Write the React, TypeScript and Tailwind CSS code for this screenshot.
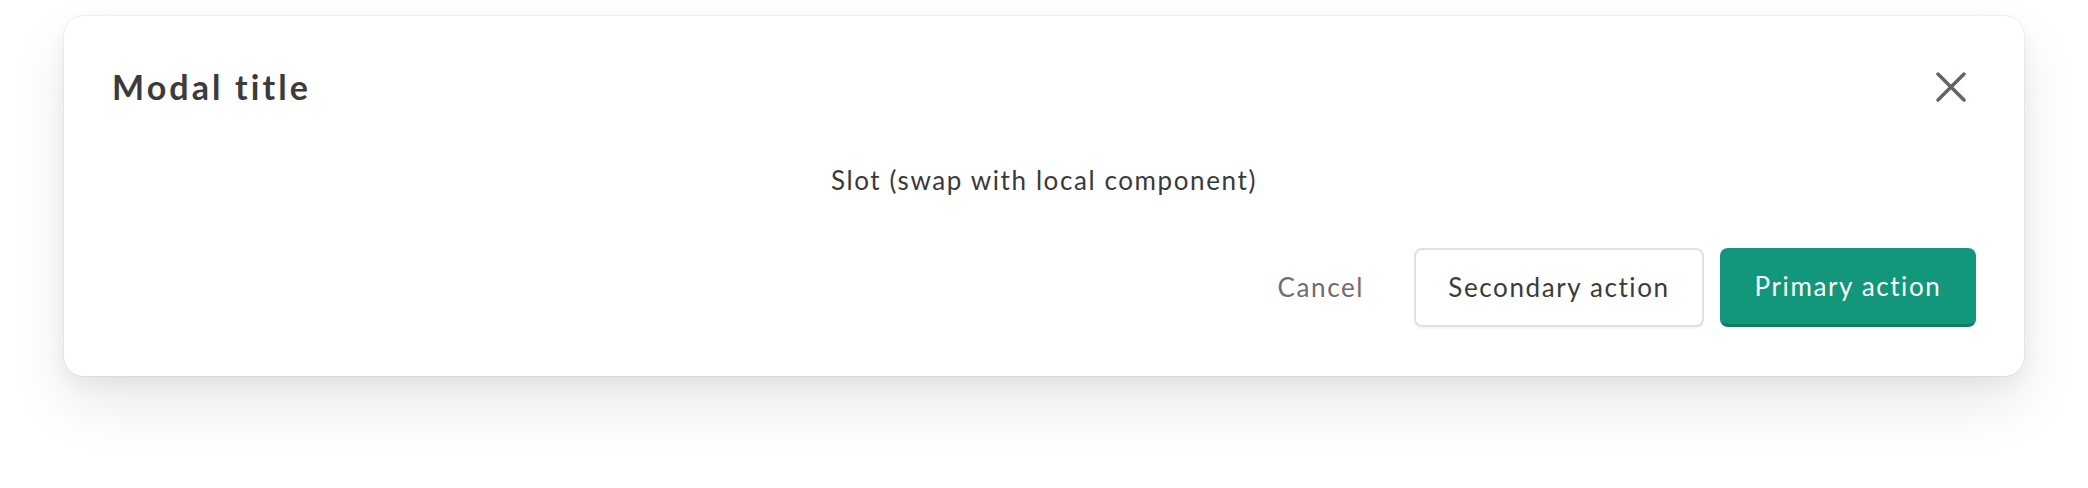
import React from "react";

function CloseIcon() {
  return (
    <svg width="30" height="30" viewBox="0 0 30 30" fill="none" aria-hidden="true">
      <path
        d="M2 2L28 28M28 2L2 28"
        stroke="#676163"
        strokeWidth="3.5"
        strokeLinecap="round"
      />
    </svg>
  );
}

export default function App() {
  return (
    <div
      className="min-h-[488px] w-[2088px] bg-white pl-16 pt-4"
      style={{ fontFamily: "Lato, 'Noto Sans', sans-serif" }}
    >
      <div className="flex h-[360px] w-[1960px] flex-col rounded-[20px] bg-white px-12 shadow-[0_0_0_1px_rgba(0,0,0,0.04),0_8px_20px_rgba(0,0,0,0.05),0_28px_60px_rgba(0,0,0,0.09)]">
        <div className="mt-[47px] flex h-[48px] items-center justify-between">
          <h2 className="text-[34px] font-bold leading-[48px] tracking-[3.1px] text-[#3b3b3b]">
            Modal title
          </h2>
          <button className="mr-[10px] flex h-[30px] w-[30px] items-center justify-center">
            <CloseIcon />
          </button>
        </div>

        <div className="mt-[51px] text-center text-[26px] leading-[36px] tracking-[1.6px] text-[#3a3a3a]">
          Slot (swap with local component)
        </div>

        <div className="mt-[50px] flex items-center justify-end gap-4">
          <button className="h-[79px] px-[34px] text-[26px] tracking-[1.6px] text-[#716c6d]">
            Cancel
          </button>
          <button className="h-[79px] w-[290px] rounded-lg border-2 border-[#e0e0e0] bg-white text-[26px] tracking-[1.6px] text-[#3b3b3b] shadow-[0_2px_0_rgba(0,0,0,0.04)]">
            Secondary action
          </button>
          <button className="h-[79px] w-[256px] rounded-lg border-b-[3px] border-[#0d7e5f] bg-[#12977a] text-[26px] tracking-[1.6px] text-white">
            Primary action
          </button>
        </div>
      </div>
    </div>
  );
}
